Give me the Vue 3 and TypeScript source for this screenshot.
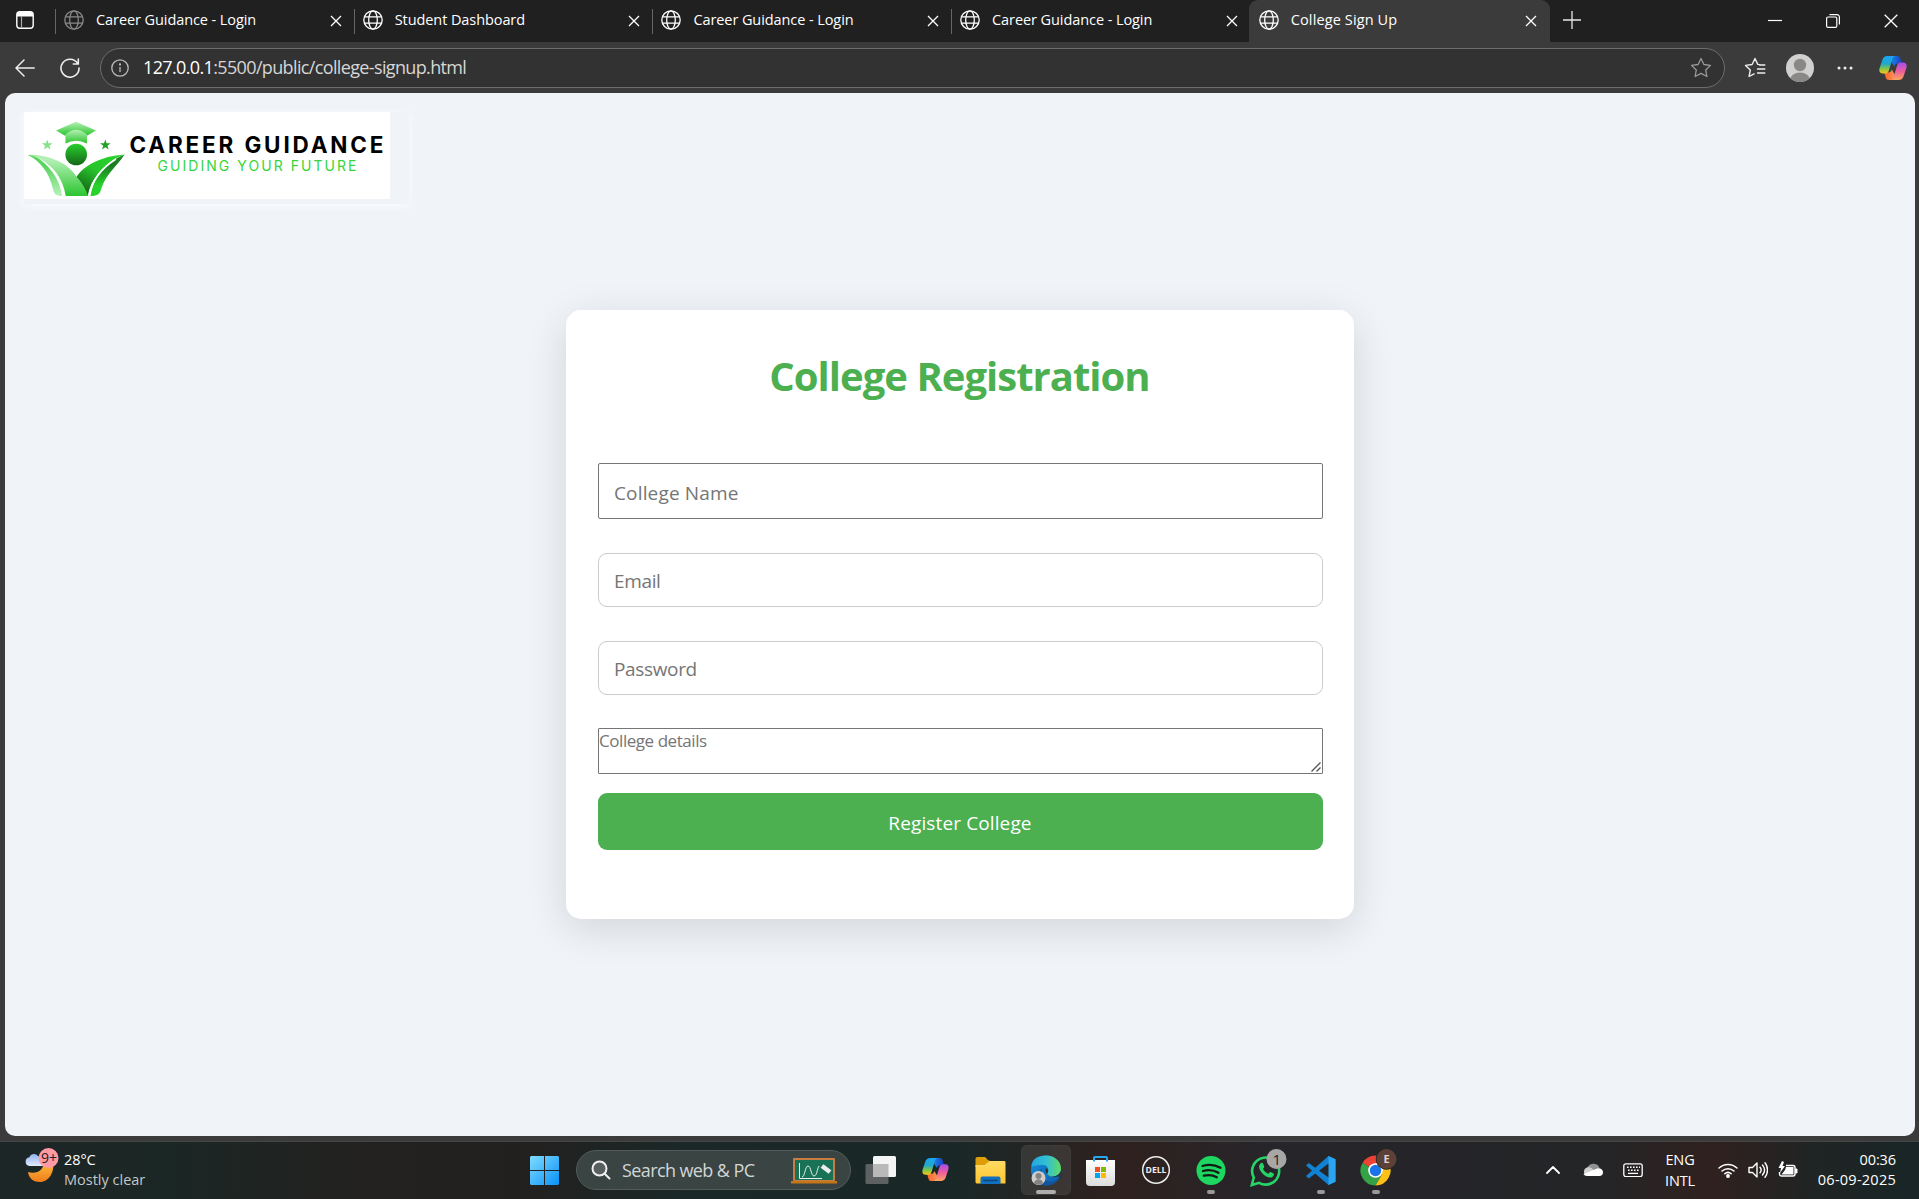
<script setup lang="ts">
interface Tab { title: string; dim?: boolean; active?: boolean }

const tabs: Tab[] = [
  { title: 'Career Guidance - Login', dim: true },
  { title: 'Student Dashboard' },
  { title: 'Career Guidance - Login' },
  { title: 'Career Guidance - Login' },
  { title: 'College Sign Up', active: true },
]
</script>

<template>
  <div class="screen">
    <svg class="defs" width="0" height="0">
      <defs>
        <linearGradient id="cpA" x1="0" y1="0" x2="0" y2="1"><stop offset="0" stop-color="#18a4f5" /><stop offset=".45" stop-color="#22a8c8" /><stop offset=".75" stop-color="#8bc83c" /><stop offset="1" stop-color="#fbc51b" /></linearGradient>
        <linearGradient id="cpB" x1="0" y1="0" x2="0" y2="1"><stop offset="0" stop-color="#a24df0" /><stop offset=".5" stop-color="#ee5d9c" /><stop offset="1" stop-color="#fda55e" /></linearGradient>
        <linearGradient id="cpC" x1="0" y1="0" x2="1" y2="0"><stop offset="0" stop-color="#1b94f0" /><stop offset="1" stop-color="#1c3fc4" /></linearGradient>
        <linearGradient id="cpD" x1="0" y1="0" x2="1" y2="0"><stop offset="0" stop-color="#f9622c" /><stop offset="1" stop-color="#fba060" /></linearGradient>
        <symbol id="copilot" viewBox="0 0 28 26">
          <path d="M9 1h9c2 0 3 1 3.500 3l1.300 4.500h-4c-2 0-3 1-3.600 3L12 6z" fill="url(#cpC)" />
          <path d="M19 25h-9c-2 0-3-1-3.500-3l-1.300-4.500h4c2 0 3-1 3.600-3L16 20z" fill="url(#cpD)" />
          <path d="M8.500 1H17c-2 0-3 1-3.600 3l-3.500 11.500c-.6 2-1.800 3-3.600 3H4C1 18.500-.2 16.500.5 13.500L3.300 5C4.100 2.400 5.800 1 8.500 1z" fill="url(#cpA)" />
          <path d="M19.500 25H11c2 0 3-1 3.600-3l3.500-11.500c.6-2 1.800-3 3.600-3H24c3 0 4.200 2 3.500 5L24.700 21c-.8 2.600-2.500 4-5.200 4z" fill="url(#cpB)" />
        </symbol>
        <symbol id="globe" viewBox="0 0 20 20">
          <g fill="none" stroke="currentColor" stroke-width="1.300">
            <circle cx="10" cy="10" r="9.200" /><ellipse cx="10" cy="10" rx="4.300" ry="9.200" /><path d="M1.500 6.800h17M1.500 13.200h17" />
          </g>
        </symbol>
        <symbol id="cross" viewBox="0 0 12 12"><path d="M1 1l10 10M11 1L1 11" stroke="currentColor" stroke-width="1.300" /></symbol>
      </defs>
    </svg>

    <header class="strip">
      <div class="tab-actions">
        <svg width="20" height="20" viewBox="0 0 20 20"><rect x="1.800" y="1.800" width="16.400" height="16.400" rx="3" fill="none" stroke="#fff" stroke-width="1.400" /><path d="M2 6.500V5a3 3 0 013-3h10a3 3 0 013 3v1.500z" fill="#fff" /><path d="M6.500 6v12" stroke="#aaa" stroke-width="1.200" /></svg>
      </div>
      <div v-for="(tab, i) in tabs" :key="i" class="tab" :class="{ active: tab.active }">
        <svg class="globe" :class="{ dim: tab.dim }"><use href="#globe" /></svg>
        <span class="tab-title">{{ tab.title }}</span>
        <svg class="cross"><use href="#cross" /></svg>
      </div>
      <svg class="plus" width="18" height="18" viewBox="0 0 18 18"><path d="M9 0v18M0 9h18" stroke="#e8e8e8" stroke-width="1.300" /></svg>
      <div class="win-buttons">
        <svg width="14" height="14" viewBox="0 0 14 14"><path d="M0 6.500h14" stroke="#fff" stroke-width="1.200" /></svg>
        <svg width="14" height="14" viewBox="0 0 14 14" fill="none" stroke="#fff" stroke-width="1.200"><rect x=".6" y="3" width="10.200" height="10.400" rx="1.500" /><path d="M3.500.7h7.400a2.500 2.500 0 012.500 2.500V10.500" /></svg>
        <svg width="14" height="14" viewBox="0 0 14 14"><path d="M.7.7l12.600 12.600M13.300.7L.7 13.300" stroke="#fff" stroke-width="1.300" /></svg>
      </div>
    </header>

    <nav class="toolbar">
      <svg class="back" width="20" height="18" viewBox="0 0 20 18" fill="none" stroke="#eee" stroke-width="1.500" stroke-linecap="round" stroke-linejoin="round"><path d="M19.200 9H1M9 1L1 9l8 8" /></svg>
      <svg class="reload" width="20" height="20" viewBox="0 0 20 20" fill="none" stroke="#eee" stroke-width="1.600" stroke-linecap="round"><path d="M17.500 5.200A9 9 0 1019 10M18.300 1v5h-5" /></svg>
      <div class="address">
        <svg width="18" height="18" viewBox="0 0 18 18" fill="none" stroke="#bbb" stroke-width="1.300"><circle cx="9" cy="9" r="8.200" /><path d="M9 8v5" /><circle cx="9" cy="5.500" r=".5" fill="#bbb" /></svg>
        <span class="url"><b>127.0.0.1</b>:5500/public/college-signup.html</span>
        <svg class="star" width="22" height="21" viewBox="0 0 22 21" fill="none" stroke="#999" stroke-width="1.300" stroke-linejoin="round"><path d="M11 1.500l2.900 6 6.600.9-4.800 4.600 1.200 6.500-5.900-3.100-5.900 3.100 1.200-6.500L1.500 8.400l6.600-.9z" /></svg>
      </div>
      <svg class="favs" width="22" height="21" viewBox="0 0 22 21" fill="none" stroke="#eee" stroke-width="1.400" stroke-linejoin="round" stroke-linecap="round"><path d="M16 7.600l-2.200-.2L11 1.500 8.100 7.500l-6.600.9 4.800 4.600-1.200 6.500 5-2.600M15.500 8h5.300M13.500 12h7.300M13.500 16h7.300" /></svg>
      <svg class="avatar" width="28" height="28" viewBox="0 0 28 28"><clipPath id="av"><circle cx="14" cy="14" r="14" /></clipPath><g clip-path="url(#av)"><path fill="#d2d0ce" d="M0 0h28v28H0z" /><circle cx="14" cy="11" r="6.200" fill="#8a8886" /><ellipse cx="14" cy="26" rx="10" ry="7.500" fill="#8a8886" /></g></svg>
      <svg class="dots" width="16" height="4" viewBox="0 0 16 4" fill="#eee"><circle cx="2" cy="2" r="1.500" /><circle cx="8" cy="2" r="1.500" /><circle cx="14" cy="2" r="1.500" /></svg>
      <svg class="copilot" width="28" height="26"><use href="#copilot" /></svg>
    </nav>

    <main class="page">
      <div class="logo">
        <svg width="366" height="87" viewBox="0 0 366 87">
          <defs>
            <linearGradient id="gl" x1="0" y1="0" x2="0" y2="1"><stop offset="0" stop-color="#b4f0b4" /><stop offset="1" stop-color="#2bc52f" /></linearGradient>
            <linearGradient id="gm" x1="0" y1="0" x2="0" y2="1"><stop offset=".15" stop-color="#b0efb1" /><stop offset="1" stop-color="#2bc52f" /></linearGradient>
            <linearGradient id="gp" x1="0" y1="0" x2="0" y2="1"><stop offset="0" stop-color="#5ed862" /><stop offset=".25" stop-color="#55d35a" /><stop offset="1" stop-color="#b8f2ba" /></linearGradient>
            <linearGradient id="gd" x1="0" y1="0" x2="0" y2="1"><stop offset="0" stop-color="#28cf2c" /><stop offset="1" stop-color="#146618" /></linearGradient>
            <linearGradient id="gr" x1=".8" y1="0" x2=".2" y2="1"><stop offset="0" stop-color="#28d22c" /><stop offset=".45" stop-color="#27c42b" /><stop offset="1" stop-color="#125c14" /></linearGradient>
            <linearGradient id="gs" x1="0" y1="0" x2="0" y2="1"><stop offset="0" stop-color="#1e8a22" /><stop offset=".25" stop-color="#1a7a1e" /><stop offset=".75" stop-color="#28d22c" /></linearGradient>
          </defs>
          <rect width="366" height="87" fill="#fff" />
          <path d="M52 9.800L72 18.500l-9 5.200Q52 13.500 41 23.700l-9-5.200z" fill="url(#gl)" />
          <path d="M41.500 22.500Q52 13 63 22.500V31.500Q52 26 41.500 31.500z" fill="url(#gl)" />
          <circle cx="52.200" cy="42.500" r="10.800" fill="url(#gd)" />
          <path d="M23.200 27.500l1.300 3.700 4 .1-3.200 2.400 1.200 3.900-3.300-2.300-3.300 2.300 1.200-3.900-3.200-2.400 4-.1z" fill="#84e388" />
          <path d="M81.300 27.500l1.300 3.700 4 .1-3.200 2.400 1.200 3.900-3.300-2.300-3.300 2.300 1.200-3.900-3.200-2.400 4-.1z" fill="#20a325" />
          <path d="M4 43C16 49 25 60 29 77c1 5 3 7 9.200 7C35.500 66 25 52 9 43z" fill="url(#gp)" />
          <path d="M4 42.500C29 43 46 53 53 65.500 60 72 63.500 78 63.700 84H41.700C39 66 29 53 13 45.500 10 44 7 43.500 4 42.500z" fill="url(#gm)" />
          <path d="M100.500 42.500C77 44 59 54 52.500 65 59 72 62.500 78 63.700 84 67 66 79 54 93 45.500z" fill="url(#gr)" />
          <path d="M100.500 42.500C94 53 82 62 77.500 76c-1.500 6-3.500 8-11 8C69 67 78 56 93 46z" fill="url(#gs)" />
          <path d="M92 47C78 56 68 67 65.200 84" fill="none" stroke="#fff" stroke-width="1.500" />
          <text x="105.500" y="40.600" textLength="254" class="brand">CAREER GUIDANCE</text>
          <text x="133.500" y="58.900" textLength="199" class="tagline">GUIDING YOUR FUTURE</text>
        </svg>
      </div>

      <form class="card" @submit.prevent>
        <h2>College Registration</h2>
        <input class="field plain" type="text" placeholder="College Name">
        <input class="field" type="email" placeholder="Email">
        <input class="field" type="password" placeholder="Password">
        <div class="details">
          <textarea placeholder="College details"></textarea>
          <svg class="grip" width="10" height="10" viewBox="0 0 10 10"><path d="M.5 9.500l9-9M5.500 9.500l4-4" stroke="#555" stroke-width="1.400" /></svg>
        </div>
        <button type="submit">Register College</button>
      </form>
    </main>

    <footer class="taskbar">
      <div class="weather">
        <svg width="36" height="36" viewBox="0 0 36 36">
          <defs>
            <linearGradient id="moon" x1="0" y1="0" x2="0" y2="1"><stop offset="0" stop-color="#fcc13c" /><stop offset="1" stop-color="#f07c1c" /></linearGradient>
            <linearGradient id="cloud" x1="0" y1="0" x2="0" y2="1"><stop offset="0" stop-color="#8fb2ec" /><stop offset="1" stop-color="#e2ebff" /></linearGradient>
          </defs>
          <path d="M28 13c2 11-4 21-13 21C9 34 4 31 3 24c9 3 17-3 15-10z" fill="url(#moon)" />
          <path d="M4.500 18a4.400 4.400 0 01-.2-8.700A5 5 0 0113 8c4 1 6 4 5 10z" fill="url(#cloud)" />
          <circle cx="23.500" cy="10" r="10" fill="#ff99a4" />
          <text x="16" y="15" class="nine">9+</text>
        </svg>
        <div class="weather-text"><span>28°C</span><span class="muted">Mostly clear</span></div>
      </div>

      <div class="apps">
        <svg class="start" width="29" height="29" viewBox="0 0 29 29"><defs><linearGradient id="win" gradientUnits="userSpaceOnUse" x1="0" y1="0" x2="29" y2="29"><stop offset="0" stop-color="#7fdcff" /><stop offset="1" stop-color="#0a91f8" /></linearGradient></defs><path d="M1 0h13v14H0V1zM15 0h13l1 1v13H15zM0 15h14v14H1l-1-1zM15 15h14v13l-1 1H15z" fill="url(#win)" /></svg>
        <div class="search">
          <svg width="20" height="20" viewBox="0 0 20 20" fill="#58605f" stroke="#f0f0f0" stroke-width="2" stroke-linecap="round"><circle cx="8.500" cy="8.500" r="7" /><path d="M13.700 13.700l4.800 4.800" /></svg>
          <span>Search web &amp; PC</span>
          <svg class="board" width="46" height="27" viewBox="0 0 46 27"><rect x="2" y="1" width="42" height="23" rx="1" fill="#c87e42" /><rect x="4" y="3" width="38" height="20" fill="#1a7256" /><path d="M0 24h46v2.500H0z" fill="#c57619" /><path d="M8.500 6v15.500H31M11 20c3 0 3-11 6-11s3 10 6 10 3-7 5-10" fill="none" stroke="#e8f2ec" stroke-width="1" /><path d="M31 9l8 6" stroke="#eee" stroke-width="4.500" /></svg>
        </div>
        <svg class="slot" viewBox="0 0 55 58"><rect x="12.500" y="23" width="23" height="20" rx="1.500" fill="#5e6161" /><rect x="20" y="15" width="23" height="21" rx="1.500" fill="#f4f4f4" /><path d="M20 23h15.500v13H20z" fill="#b9b9b9" /></svg>
        <svg class="slot" viewBox="0 0 55 58"><use href="#copilot" x="13.500" y="16" width="28" height="25" /></svg>
        <svg class="slot" viewBox="0 0 55 58"><defs><linearGradient id="fold" x1="0" y1="0" x2="0" y2="1"><stop offset="0" stop-color="#ffdb63" /><stop offset="1" stop-color="#fdc52e" /></linearGradient></defs><path d="M12.500 18c0-1 .5-2 2-2h7c2 0 2 3 5 3.500V26h-14z" fill="#dd9d08" /><path d="M12.500 24h9l5-4H41c1 0 1.500.5 1.500 1.500v21h-28c-1.500 0-2-.5-2-2z" fill="url(#fold)" /><path d="M17.500 43v-5c0-2 1-2.500 2.500-2.500h15c1.500 0 2.500.5 2.500 2.500v5z" fill="#1170bf" /><path d="M21 39.500h13" stroke="#0b477c" stroke-width="1.500" stroke-linecap="round" /></svg>
        <svg class="slot" viewBox="0 0 55 58">
          <defs>
            <linearGradient id="ed1" x1="0" y1="0" x2="1" y2="0"><stop offset="0" stop-color="#21a6e7" /><stop offset=".55" stop-color="#35c1ce" /><stop offset="1" stop-color="#61dc60" /></linearGradient>
            <linearGradient id="ed2" x1="0" y1="0" x2="1" y2="1"><stop offset="0" stop-color="#1593df" /><stop offset="1" stop-color="#0a59a9" /></linearGradient>
          </defs>
          <rect x="3.500" y="4.500" width="49" height="49" rx="5" fill="#fff" fill-opacity=".09" stroke="#fff" stroke-opacity=".08" />
          <circle cx="28" cy="29.500" r="15" fill="url(#ed2)" />
          <path d="M13.300 26C13.500 18 20 14.500 28 14.500c9 0 15 6 15 13 0 5-4 8-9 8-4 0-6-1.500-4.500-3.500 2-3 .5-8-4.500-8-5 0-10 1-11.700 2z" fill="url(#ed1)" />
          <path d="M24.500 27c-3 7 2 13.500 8 13.500 4 0 7-1.500 9-4-1 2-5 8.500-14 8-8-1-9-13-3-17.500z" fill="#12559e" />
          <path d="M27.800 27c-1.500 6 3.700 10.500 13 8.500l3 2 .8-6-2-1c-2 4-5 5-8.500 5-4 0-6-1.500-4.500-3.500 1-2 1-4-1.800-5z" fill="#2b3636" />
          <circle cx="20.500" cy="37" r="7" fill="#cfcdcb" /><circle cx="20.500" cy="35" r="3" fill="#858381" /><path d="M16 42.300c.5-5.500 8.500-5.500 9 0-3 2-6 2-9 0z" fill="#858381" />
          <rect x="18" y="49" width="20" height="4" rx="2" fill="#b0aeac" />
        </svg>
        <svg class="slot" viewBox="0 0 55 58"><defs><linearGradient id="bag" x1="0" y1="0" x2="0" y2="1"><stop offset="0" stop-color="#fff" /><stop offset="1" stop-color="#dcdcdc" /></linearGradient></defs><path d="M13 19h29v22a4 4 0 01-4 4H17a4 4 0 01-4-4z" fill="url(#bag)" /><path d="M21 20.500v-3.500c0-.7.300-1 1-1h11c.7 0 1 .3 1 1v3.500" fill="none" stroke="#29a7ee" stroke-width="2" /><path d="M22 26h5v5h-5z" fill="#f25022" /><path d="M28 26h5v5h-5z" fill="#7fba00" /><path d="M22 32h5v5h-5z" fill="#00a4ef" /><path d="M28 32h5v5h-5z" fill="#ffb900" /></svg>
        <svg class="slot" viewBox="0 0 55 58"><circle cx="28" cy="29" r="13.300" fill="none" stroke="#eee" stroke-width="1.500" /><text x="17.500" y="32.300" textLength="21" lengthAdjust="spacingAndGlyphs" class="dell">DELL</text></svg>
        <svg class="slot" viewBox="0 0 55 58"><circle cx="28" cy="29.500" r="14.500" fill="#1ed760" /><path d="M19.500 25c6-1.800 12.500-1.200 18 1.800M20 30c5.500-1.500 10.500-1 15.500 1.700M20.800 34.700c4.700-1.200 9-.8 13 1.500" fill="none" stroke="#121a15" stroke-width="2.300" stroke-linecap="round" /><rect x="24" y="49" width="8" height="4" rx="2" fill="#9a9898" /></svg>
        <svg class="slot" viewBox="0 0 55 58"><path d="M13.800 44l2-7.500A13.500 13.500 0 1121 41.800z" fill="none" stroke="#25d366" stroke-width="2.600" /><path d="M22.500 22.500c1-1 2-1 2.500 0l1.200 2.900c.3.800-1 1.800-1.300 2.300 1 2.300 3 4 5.400 5 .8-.6 1.500-2 2.300-1.700l3 1.500c.8.400.2 3-1.600 3.700-3 1.300-7.500-1.200-10-4.200-3-3.500-4-7.500-1.500-9.500z" fill="#25d366" /><circle cx="38.500" cy="18" r="10" fill="#a9a7a5" /><text x="34.500" y="23.500" class="one">1</text></svg>
        <svg class="slot" viewBox="0 0 55 58"><path d="M35.500 15l7 3.300v22.500L35.500 44 13 24.500l2.700-2.500 20.500 15V22L15.700 37.500 13 35z" fill="#1182d2" /><path d="M35.500 15l7 3.300v22.500L35.500 44z" fill="#29a5f1" /><rect x="24" y="49" width="8" height="4" rx="2" fill="#9a9898" /></svg>
        <svg class="slot" viewBox="0 0 55 58"><path d="M27.500 29.500L14.500 22a15 15 0 0126 0z" fill="#ea4335" /><path d="M27.500 29.500L14.500 22a15 15 0 0013 22.500l7.500-13z" fill="#34a348" /><path d="M27.500 29.500V22h13a15 15 0 01-13 22.500l6.500-11.200z" fill="#fbc116" /><circle cx="27.500" cy="29.500" r="7.300" fill="#fff" /><circle cx="27.500" cy="29.500" r="5.700" fill="#1a73e8" /><circle cx="38.500" cy="18" r="10.700" fill="#242526" /><circle cx="38.500" cy="18" r="10" fill="#5d4037" /><text x="35.500" y="22" class="letter">E</text><rect x="24" y="49" width="8" height="4" rx="2" fill="#9a9898" /></svg>
      </div>

      <div class="tray">
        <svg class="chev" width="14" height="8" viewBox="0 0 14 8" fill="none" stroke="#fff" stroke-width="1.800" stroke-linecap="round" stroke-linejoin="round"><path d="M1 7l6-6 6 6" /></svg>
        <svg class="onedrive" width="20" height="14" viewBox="0 0 20 14"><path d="M4 6C5 2 8 .5 11 .8c3 .2 5 2 5.500 4.200L10 9z" fill="#919191" /><path d="M4.500 13A4.400 4.400 0 014 4.500c2-.5 4 0 5.500 1.500L13 9z" fill="#d0d0d0" /><path d="M13 6c2-1.500 7-.5 7 3.500 0 2-1.500 3.500-3.500 3.500H4.500C2.500 13 1 12 .5 11z" fill="#fff" /></svg>
        <svg class="kbd" width="20" height="14" viewBox="0 0 20 14"><rect x=".8" y=".8" width="18.400" height="12.800" rx="2" fill="none" stroke="#fff" stroke-width="1.300" /><path d="M4 4.200h13M5 7.200h11" stroke="#fff" stroke-width="1.600" stroke-dasharray="1.600 1.400" /><path d="M5 10.400h10" stroke="#fff" stroke-width="1.300" /></svg>
        <div class="lang"><span>ENG</span><span>INTL</span></div>
        <svg class="wifi" width="20" height="16" viewBox="0 0 20 16" fill="none" stroke="#fff" stroke-width="1.500" stroke-linecap="round"><path d="M1 6a13 13 0 0118 0M4 9a8.800 8.800 0 0112 0M6.800 11.800a4.800 4.800 0 016.400 0" /><circle cx="10" cy="14" r="1.200" fill="#fff" /></svg>
        <svg class="vol" width="20" height="18" viewBox="0 0 20 18" fill="none" stroke="#fff" stroke-width="1.400" stroke-linecap="round" stroke-linejoin="round"><path d="M1 6.500h3.500L9 2v14l-4.500-4.500H1zM12 6.300c1.300 1.500 1.300 4 0 5.500M14.500 4c2.500 3 2.500 7 0 10M17 1.800c3.300 4 3.300 10.500 0 14.500" /></svg>
        <svg class="bat" width="20" height="18" viewBox="0 0 20 18"><path d="M8 4.500h7a2 2 0 012 2v6.500a2 2 0 01-2 2H3.500a2 2 0 01-2-2V11" fill="none" stroke="#fff" stroke-width="1.400" /><path d="M8 6h7.500v7.500H3.500L7 9z" fill="#fff" /><path d="M17.500 8h1.500v4h-1.500z" fill="#fff" stroke="#fff" /><path d="M4 0L.5 7H3l-1 5 5-7H4.500L6 1z" fill="#fff" /></svg>
        <div class="clock"><span>00:36</span><span class="date">06-09-2025</span></div>
      </div>
    </footer>
  </div>
</template>

<style>
html, body { margin: 0; background: #3b3b3b; overflow: hidden; }
</style>

<style scoped>
* { box-sizing: border-box; }
svg { display: block; flex: none; }
.defs { position: absolute; }
.screen { width: 1919px; height: 1199px; display: flex; flex-direction: column; background: #3b3b3b; font-family: "Open Sans", "Noto Sans", sans-serif; overflow: hidden; }

.strip { height: 42px; flex: none; display: flex; background: #202020; color: #fff; }
.tab-actions { width: 55px; padding: 10px 0 0 15px; }
.tab { position: relative; width: 298.700px; flex: none; display: flex; padding-left: 9px; }
.tab::before { content: ""; position: absolute; left: 0; top: 9px; width: 1px; height: 25px; background: #666; }
.tab.active { background: #3b3b3b; border-radius: 9px 9px 0 0; width: 301px; margin-left: -1px; padding-left: 10px; }
.tab.active::before { display: none; }
.globe { width: 20px; height: 20px; margin-top: 10px; }
.globe.dim { color: #888; }
.tab-title { flex: 1; margin-left: 12px; font-size: 14.500px; line-height: 40px; white-space: nowrap; letter-spacing: -.08px; }
.active .tab-title { letter-spacing: .12px; }
.cross { width: 12px; height: 12px; margin: 15px 12px 0 0; }
.active .cross { margin-right: 13px; }
.plus { margin: 11px 0 0 13px; }
.win-buttons { margin-left: auto; padding: 14px 21px 0 0; display: flex; gap: 44px; }

.toolbar { height: 51px; flex: none; display: flex; align-items: center; padding: 0 12px 0 15px; background: #3b3b3b; }
.reload { margin-left: 25px; }
.address { width: 1625px; height: 40px; margin-left: 20px; padding: 0 12px 0 10px; display: flex; align-items: center; background: #323232; border: 1px solid #6d6d6d; border-radius: 20px; color: #d6d6d6; }
.url { flex: 1; margin: -1px 0 0 14px; font-size: 18px; letter-spacing: -.64px; }
.url b { color: #fff; font-weight: 400; }
.favs { margin-left: 19px; }
.avatar { margin-left: 20px; }
.dots { margin-left: 23px; }
.copilot { margin-left: auto; }

.page { height: 1043px; flex: none; margin: 0 4px 0 5px; padding: 19px; background: #f0f4f9; border-radius: 10px; display: flex; flex-direction: column; align-items: center; }
.logo { align-self: flex-start; width: 385px; height: 92px; flex: none; box-shadow: 0 2px 8px rgba(255, 255, 255, .7); }
.brand { font: 700 22.500px Inter, sans-serif; fill: #000; }
.tagline { font: 400 14px Inter, sans-serif; fill: #36d63b; }

.card { width: 788px; height: 609px; flex: none; margin-top: 106px; padding: 0 31px 0 32px; display: flex; flex-direction: column; background: #fff; border-radius: 15px; box-shadow: 0 10px 40px rgba(0, 0, 0, .13); }
h2 { margin: 36px 0 57px; height: 60px; line-height: 60px; padding-right: 2px; text-align: center; font-size: 40px; font-weight: 700; color: #4caf50; white-space: nowrap; letter-spacing: -.98px; }
.field { height: 54px; width: 725px; flex: none; margin: 0 0 34px; padding: 1px 15px 0; border: 1px solid #ccc; border-radius: 9px; outline: none; background: #fff; font: 19px "Open Sans", "Noto Sans", sans-serif; letter-spacing: -.35px; }
.field.plain { height: 56px; padding: 3px 15px 0; border: 1px solid #767676; border-radius: 2px; letter-spacing: .15px; }
.field[type="password"] { margin-bottom: 33px; }
.field::placeholder, textarea::placeholder { color: #757575; opacity: 1; }
.details { position: relative; flex: none; width: 725px; height: 46px; margin-bottom: 19px; }
textarea { display: block; height: 46px; width: 725px; margin: 0; padding: 0; border: 1px solid #767676; border-radius: 1px; resize: none; font: 17px/24px "Open Sans", "Noto Sans", sans-serif; letter-spacing: -.45px; overflow: hidden; }
.grip { position: absolute; right: 2px; bottom: 2px; }
button { height: 57px; width: 725px; border: 0; border-radius: 9px; padding: 3px 1px 0 0; background: #4caf50; color: #fff; font: 19px "Open Sans", "Noto Sans", sans-serif; letter-spacing: .12px; }

.taskbar { margin-top: 5px; height: 58px; flex: none; display: flex; border-top: 1px solid #454545; color: #fff; font-size: 14.500px; line-height: 20px; background: linear-gradient(90deg, #1d2626 0, #1b2725 170px, #222220 330px, #22201f 520px, #1a2827 680px, #192827 950px, #2f211f 1120px, #26252a 1270px, #242527 1600px, #30211f 1710px, #202424 1810px, #182526 1919px); }
.weather { display: flex; width: 530px; padding: 6px 0 0 25px; gap: 3px; }
.weather-text { display: flex; flex-direction: column; padding-top: 2px; letter-spacing: -.1px; }
.muted { color: #c3c8c8; letter-spacing: 0; }
.nine { font: 14px "Open Sans", sans-serif; fill: #222; }
.apps { display: flex; width: 875px; flex: none; height: 58px; margin-top: -1px; }
.start { margin-top: 15px; }
.search { width: 275px; height: 40px; margin: 9px 2px 0 17px; padding: 0 13px 0 14px; border-radius: 20px; background: #394443; border: 1px solid #525b5a; display: flex; align-items: center; flex: none; }
.search span { flex: 1; margin-left: 11px; font-size: 18px; color: #d2d6d6; letter-spacing: -.6px; white-space: nowrap; }
.slot { width: 55px; height: 58px; }
.dell { font: 700 9px "Open Sans", sans-serif; fill: #eee; }
.one { font: 15px "Open Sans", sans-serif; fill: #222; }
.letter { font: 700 11px "Open Sans", sans-serif; fill: #ded6d2; }

.tray { display: flex; align-items: center; flex: 1; padding: 0 23px 2px 141px; white-space: nowrap; }
.onedrive { margin-left: 23px; }
.kbd { margin-left: 20px; }
.lang, .clock { display: flex; flex-direction: column; letter-spacing: -.1px; }
.lang { width: 32px; margin-left: 21px; align-items: center; line-height: 20.500px; padding-top: 2px; }
.wifi { margin-left: 22px; }
.vol, .bat { margin-left: 10px; }
.clock { margin-left: auto; text-align: right; }
.date { letter-spacing: .25px; }
</style>
